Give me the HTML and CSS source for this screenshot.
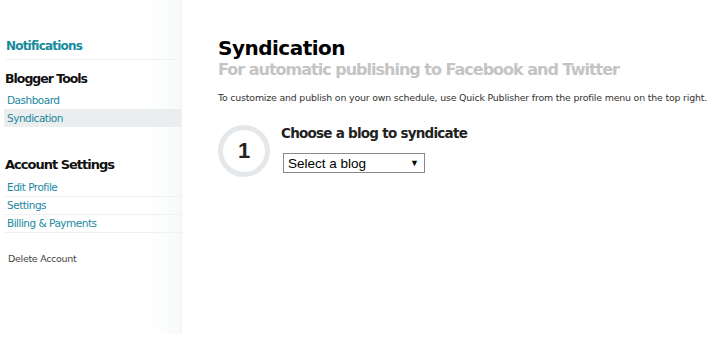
FILE: index.html
```html
<!DOCTYPE html>
<html>
<head>
<meta charset="utf-8">
<link rel="stylesheet" href="styles.css">
</head>
<body>
<div class="page">
  <aside class="sidebar">
    <a class="notif">Notifications</a>
    <h3 class="sec sec-first">Blogger Tools</h3>
    <ul class="menu">
      <li><a>Dashboard</a></li>
      <li class="active"><a>Syndication</a></li>
    </ul>
    <h3 class="sec sec-second">Account Settings</h3>
    <ul class="menu lined">
      <li><a>Edit Profile</a></li>
      <li><a>Settings</a></li>
      <li><a>Billing &amp; Payments</a></li>
    </ul>
    <a class="delete">Delete Account</a>
  </aside>
  <main class="content">
    <h1 class="title">Syndication</h1>
    <h2 class="subtitle">For automatic publishing to Facebook and Twitter</h2>
    <p class="desc">To customize and publish on your own schedule, use Quick Publisher from the profile menu on the top right.</p>
    <div class="step">
      <div class="num">1</div>
      <div class="step-body">
        <h3 class="step-title">Choose a blog to syndicate</h3>
        <div class="select"><span>Select a blog</span><span class="arrow">▼</span></div>
      </div>
    </div>
  </main>
</div>
</body>
</html>
```
FILE: styles.css
```css
html, body { margin: 0; padding: 0; background: #fff; }
body { font-family: "DejaVu Sans", Verdana, sans-serif; color: #222; }
.page { display: flex; height: 337px; }
.sidebar {
  width: 182px;
  height: 334px;
  box-sizing: border-box;
  border-right: 1px solid #eef2f2;
  background: linear-gradient(to right, #fff 0, #fff 150px, #f7f9f9 182px);
  padding: 39px 0 0 0;
  display: flex;
  flex-direction: column;
}
.notif {
  display: block;
  margin: 0 5px 0 6px;
  padding-bottom: 6px;
  border-bottom: 1px solid #eef2f2;
  font-weight: bold;
  font-size: 12px;
  color: #168a9c;
  letter-spacing: -0.8px;
}
.sec {
  margin: 0;
  padding-left: 5px;
  font-size: 12.5px;
  font-weight: bold;
  color: #111;
  letter-spacing: -1px;
}
.sec-first { margin-top: 11px; }
.sec-second { margin-top: 30px; font-size: 13px; }
.menu { list-style: none; margin: 5px 0 0 4px; padding: 0; }
.menu li { height: 18px; line-height: 18px; padding-left: 3px; font-size: 10.5px; color: #2088a0; letter-spacing: -0.5px; }
.menu li.active { background: #ebeeef; }
.menu.lined li { border-bottom: 1px solid #eef2f2; height: 17px; line-height: 17px; }
.menu.lined { margin-top: 7px; }
.delete { margin: 20px 0 0 8px; font-size: 9.5px; color: #444; letter-spacing: -0.3px; }
.content { padding: 36px 0 0 36px; flex: 1; }
.title { margin: 0; font-size: 20px; font-weight: bold; color: #000; letter-spacing: -0.5px; line-height: 24px; }
.subtitle { margin: 0; font-size: 16px; font-weight: bold; color: #c4c4c4; letter-spacing: -1px; line-height: 20px; }
.desc { margin: 12px 0 0 0; font-size: 9.4px; color: #333; letter-spacing: -0.17px; }
.step { display: flex; margin-top: 22px; }
.num {
  width: 42px; height: 42px;
  border: 5px solid #e4e8ea;
  border-radius: 50%;
  display: flex; align-items: center; justify-content: center;
  font-size: 22px; font-weight: bold; color: #222;
  font-family: "Liberation Sans", Arial, sans-serif;
}
.step-body { margin-left: 11px; }
.step-title { margin: 0; font-size: 13.5px; font-weight: bold; color: #222; letter-spacing: -0.75px; }
.select {
  margin-top: 12px; margin-left: 2px;
  width: 142px; height: 20px; box-sizing: border-box;
  border: 1px solid #8a8a8a; background: #fff;
  display: flex; align-items: center; justify-content: space-between;
  padding: 0 5px 0 4px;
  font-family: "Liberation Sans", Arial, sans-serif; font-size: 13.5px; color: #000;
}
.arrow { font-size: 9px; }
```
